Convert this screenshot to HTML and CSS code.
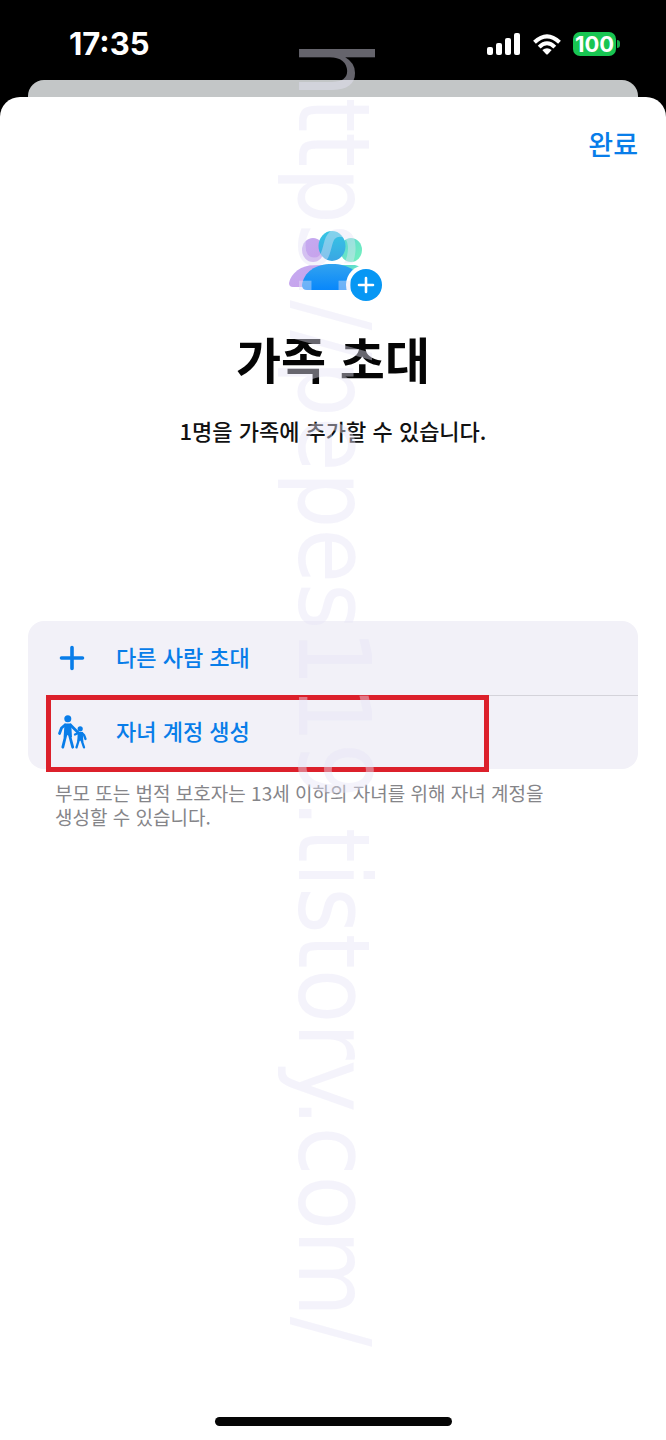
FILE: index.html
```html
<!DOCTYPE html>
<html lang="ko">
<head>
<meta charset="utf-8">
<meta name="viewport" content="width=device-width, initial-scale=1">
<title>가족 초대</title>
<link rel="stylesheet" href="styles.css">
</head>
<body>
<div class="screen">
  <header class="status">
    <time class="clock">17:35</time>
    <div class="indicators">
      <svg class="signal" viewBox="0 0 34 22" aria-hidden="true"><rect x="0" y="14" width="6" height="8" rx="2"/><rect x="9" y="10" width="6" height="12" rx="2"/><rect x="18" y="5" width="6" height="17" rx="2"/><rect x="27" y="0" width="6" height="22" rx="2"/></svg>
      <svg class="wifi" viewBox="0 0 28 21" aria-hidden="true"><g fill="none" stroke="#fff" stroke-width="4"><path d="M1.5 8.3Q14-3.6 26.500 8.300"/><path d="M6.200 13.200Q14 5.400 21.800 13.200"/></g><path d="M9.300 16Q14 12.400 18.700 16L14.800 20.200Q14 21 13.200 20.200Z"/></svg>
      <div class="battery"><span class="level">100</span><span class="tip"></span></div>
    </div>
  </header>
  <div class="backdrop"></div>
  <main class="sheet">
    <div class="toolbar"><button class="done" type="button">완료</button></div>
    <svg class="family" viewBox="-8 0 104 72" aria-hidden="true">
      <defs>
        <linearGradient id="left" x1="0" y1="0" x2="1" y2="1"><stop offset="0" stop-color="#c4abf1"/><stop offset="1" stop-color="#c9a0ea"/></linearGradient>
        <linearGradient id="right" x1="0" y1="0" x2="1" y2="1"><stop offset="0" stop-color="#59d5d2"/><stop offset="1" stop-color="#77f2bd"/></linearGradient>
        <linearGradient id="head" x1="0" y1="0" x2="0" y2="1"><stop offset="0" stop-color="#35c6e4"/><stop offset="1" stop-color="#3aa6e4"/></linearGradient>
        <linearGradient id="torso" x1="0" y1="0" x2="0" y2="1"><stop offset="0" stop-color="#32a3ef"/><stop offset="1" stop-color="#0887fb"/></linearGradient>
      </defs>
      <ellipse cx="24" cy="19" rx="11" ry="12" fill="url(#left)"/>
      <ellipse cx="62" cy="19" rx="11" ry="12" fill="url(#right)"/>
      <ellipse cx="43" cy="15" rx="13.500" ry="15" fill="url(#head)"/>
      <path d="M0 52C2 42 12 34 26 34H43L18 56H4Q0 56 0 52Z" fill="url(#left)"/>
      <path d="M50 34H66Q71 35 73 38L60 50Z" fill="url(#right)"/>
      <path d="M13 54C15 41 26 33 43 33S71 41 73 54Q73 59 68 59H18Q13 59 13 54Z" fill="url(#torso)"/>
      <circle cx="77" cy="54" r="20" fill="#fff"/>
      <circle cx="77" cy="54" r="16" fill="#0797f4"/>
      <path d="M77 47V61M70 54H84" fill="none" stroke="#fff" stroke-width="2.600" stroke-linecap="round"/>
    </svg>
    <h1 class="title">가족 초대</h1>
    <p class="subtitle">1명을 가족에 추가할 수 있습니다.</p>
    <div class="options">
      <button class="option" type="button">
        <svg class="icon" viewBox="0 0 32 36" aria-hidden="true"><path d="M16 7.500V28.500M5.500 18H26.500" fill="none" stroke="#087de9" stroke-width="3.600" stroke-linecap="round"/></svg>
        <span class="label">다른 사람 초대</span>
      </button>
      <button class="option" type="button">
        <svg class="icon" viewBox="0 0 32 36" aria-hidden="true"><g fill="none" stroke="#087de9" stroke-linecap="round" stroke-linejoin="round"><g stroke-width="2.800"><path d="M9 11L5.500 14L3.500 19.500"/><path d="M14.500 11L18 14.500L22 18.500"/><path d="M9.800 21L6.800 33.200"/><path d="M13.500 21L16.700 33.200"/></g><g stroke-width="2.300"><path d="M22.500 19L19 20.500"/><path d="M26 19L28 21L29.500 25"/><path d="M22.800 26L20.500 33.400"/><path d="M25.500 26L28 33.400"/></g></g><g fill="#087de9"><circle cx="11.800" cy="4.800" r="3.500"/><path d="M8.500 9.600H15.200L16 23.500L11.800 21L7.600 23.500Z"/><circle cx="24.200" cy="14.800" r="2.600"/><path d="M21.800 18H26.700L27.400 28L24.200 26.500L21.200 28Z"/></g></svg>
        <span class="label">자녀 계정 생성</span>
        <span class="marker"></span>
      </button>
    </div>
    <p class="note">부모 또는 법적 보호자는 13세 이하의 자녀를 위해 자녀 계정을 생성할 수 있습니다.</p>
    <div class="home"></div>
  </main>
  <div class="watermark">https://pepes119.tistory.com/</div>
</div>
</body>
</html>
```
FILE: styles.css
```css
* { box-sizing: border-box; }
body {
  margin: 0;
  background: #000;
  font-family: "Noto Sans CJK KR", sans-serif;
}
button {
  border: 0;
  padding: 0;
  background: none;
  font-family: inherit;
  color: #087de9;
  cursor: pointer;
}
.screen {
  position: relative;
  display: flex;
  flex-direction: column;
  min-height: 100vh;
  overflow: hidden;
}
.status {
  display: flex;
  justify-content: space-between;
  align-items: center;
  height: 80px;
  padding: 8px 46px 0 69px;
  color: #fff;
}
.clock {
  font: 700 31px/32px Inter, sans-serif;
}
.indicators {
  display: flex;
  align-items: center;
  gap: 12px;
}
.indicators svg { fill: #fff; }
.signal { width: 34px; height: 22px; }
.wifi { width: 28px; height: 21px; }
.battery { display: flex; align-items: center; gap: 1px; }
.level {
  width: 43px;
  border-radius: 7px;
  background: #18c552;
  font: 700 22px/24px Inter, sans-serif;
  text-align: center;
}
.tip {
  width: 3px;
  height: 8px;
  border-radius: 0 3px 3px 0;
  background: #18a947;
}
.backdrop {
  height: 17px;
  margin: 0 28px;
  border-radius: 16px 16px 0 0;
  background: #c3c6c7;
}
.sheet {
  flex: 1;
  display: flex;
  flex-direction: column;
  border-radius: 20px 20px 0 0;
  background: #fff;
}
.toolbar {
  display: flex;
  justify-content: flex-end;
  padding: 27px 28px 0;
}
.done { font-size: 27px; line-height: 40px; font-weight: 500; }
.family {
  width: 104px;
  height: 72px;
  margin: 67px auto 0;
}
.title {
  margin: 19px 0 0;
  color: #050505;
  font-size: 49px;
  line-height: 72px;
  font-weight: 700;
  text-align: center;
}
.subtitle {
  margin: 18px 0 0;
  color: #111;
  font-size: 22px;
  line-height: 36px;
  font-weight: 500;
  text-align: center;
}
.options {
  margin: 173px 28px 0;
  border-radius: 16px;
  background: #f2f1f8;
}
.option {
  position: relative;
  display: flex;
  align-items: center;
  gap: 28px;
  width: 100%;
  height: 74px;
  padding-left: 28px;
}
.option + .option::before {
  content: "";
  position: absolute;
  top: 0;
  left: 88px;
  right: 0;
  height: 1px;
  background: #d4d3da;
}
.icon { width: 32px; height: 36px; }
.label { padding-bottom: 4px; font-size: 22px; line-height: 36px; font-weight: 500; }
.marker {
  position: absolute;
  top: 0;
  bottom: -3px;
  left: 18px;
  width: 443px;
  border: 5px solid #dc202b;
}
.note {
  margin: 12px 80px 24px 55px;
  color: #858589;
  font-size: 19px;
  line-height: 24px;
  word-break: keep-all;
}
.home {
  width: 237px;
  height: 9px;
  margin: auto auto 14px;
  border-radius: 5px;
  background: #050505;
}
.watermark {
  position: absolute;
  top: 41px;
  left: 275px;
  color: rgba(230, 227, 245, 0.44);
  font-family: "DejaVu Sans Condensed", "DejaVu Sans", sans-serif;
  font-size: 99px;
  line-height: 116px;
  white-space: nowrap;
  writing-mode: vertical-rl;
  pointer-events: none;
}
```
